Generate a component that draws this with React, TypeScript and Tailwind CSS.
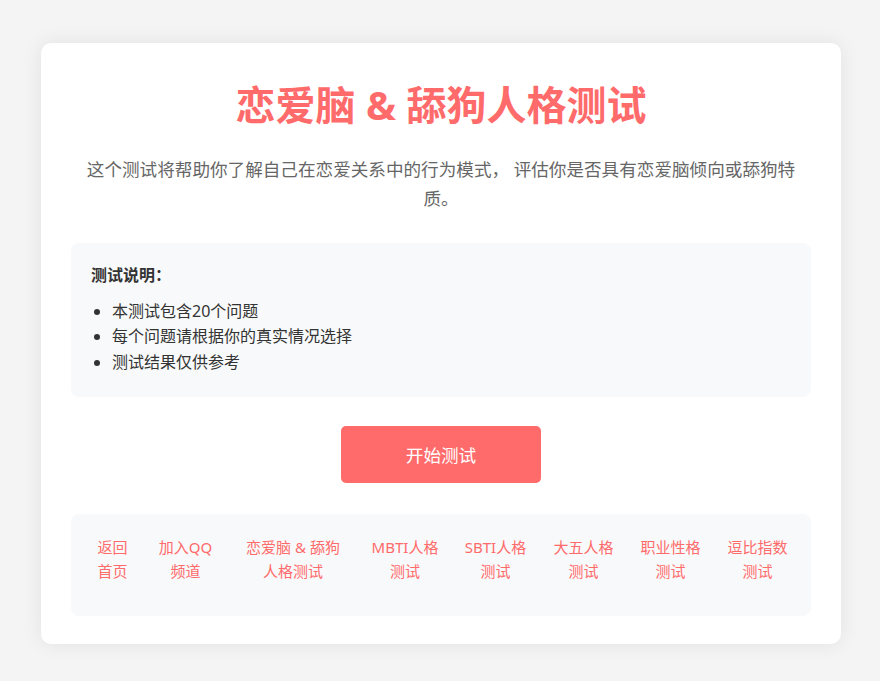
const FONT = {
  fontFamily: '"Noto Sans", "Noto Sans CJK SC", sans-serif',
};

const LINKS = [
  { lines: ["返回", "首页"], width: "w-[43px]" },
  { lines: ["加入QQ", "频道"], width: "w-[63px]" },
  { lines: ["恋爱脑 & 舔狗", "人格测试"], width: "w-[112px]" },
  { lines: ["MBTI人格", "测试"], width: "w-[72px]" },
  { lines: ["SBTI人格", "测试"], width: "w-[69px]" },
  { lines: ["大五人格", "测试"], width: "w-[67px]" },
  { lines: ["职业性格", "测试"], width: "w-[67px]" },
  { lines: ["逗比指数", "测试"], width: "w-[67px]" },
];

const NOTES = ["本测试包含20个问题", "每个问题请根据你的真实情况选择", "测试结果仅供参考"];

export default function App() {
  return (
    <div className="min-h-[681px] bg-[#f4f4f4] pl-[2px] pt-[43px]" style={FONT}>
      <div className="mx-auto w-[800px] rounded-[10px] bg-white px-[30px] pb-[28px] pt-[30px] shadow-[0_0_20px_rgba(0,0,0,0.08)]">
        <h1 className="mt-[8px] text-center text-[40px] font-bold leading-[48px] text-[#ff6b6b]">
          恋爱脑 &amp; 舔狗人格测试
        </h1>
        <p className="mt-[26px] text-center text-[17.6px] leading-[29px] text-[#666]">
          这个测试将帮助你了解自己在恋爱关系中的行为模式， 评估你是否具有恋爱脑倾向或舔狗特质。
        </p>

        <div className="mt-[30px] rounded-[8px] bg-[#f8f9fa] px-[20px] pb-[22px] pt-[20px] text-[#333]">
          <p className="text-[16px] font-bold leading-[25.6px]">测试说明：</p>
          <ul className="mt-[10px] list-disc pl-[21px] text-[16px] leading-[25.6px]">
            {NOTES.map((n) => (
              <li key={n}>{n}</li>
            ))}
          </ul>
        </div>

        <div className="mt-[29px] flex justify-center">
          <button
            type="button"
            className="h-[57px] w-[200px] rounded-[5px] bg-[#ff6b6b] text-[17.6px] text-white"
          >
            开始测试
          </button>
        </div>

        <div className="mt-[31px] flex justify-center gap-[20px] rounded-[8px] bg-[#f8f9fa] pb-[33px] pt-[21px]">
          {LINKS.map((l) => (
            <a
              key={l.lines.join("")}
              href="#"
              className={`${l.width} shrink-0 text-center text-[15px] leading-[24px] whitespace-nowrap text-[#ff6b6b]`}
            >
              {l.lines[0]}
              <br />
              {l.lines[1]}
            </a>
          ))}
        </div>
      </div>
    </div>
  );
}
